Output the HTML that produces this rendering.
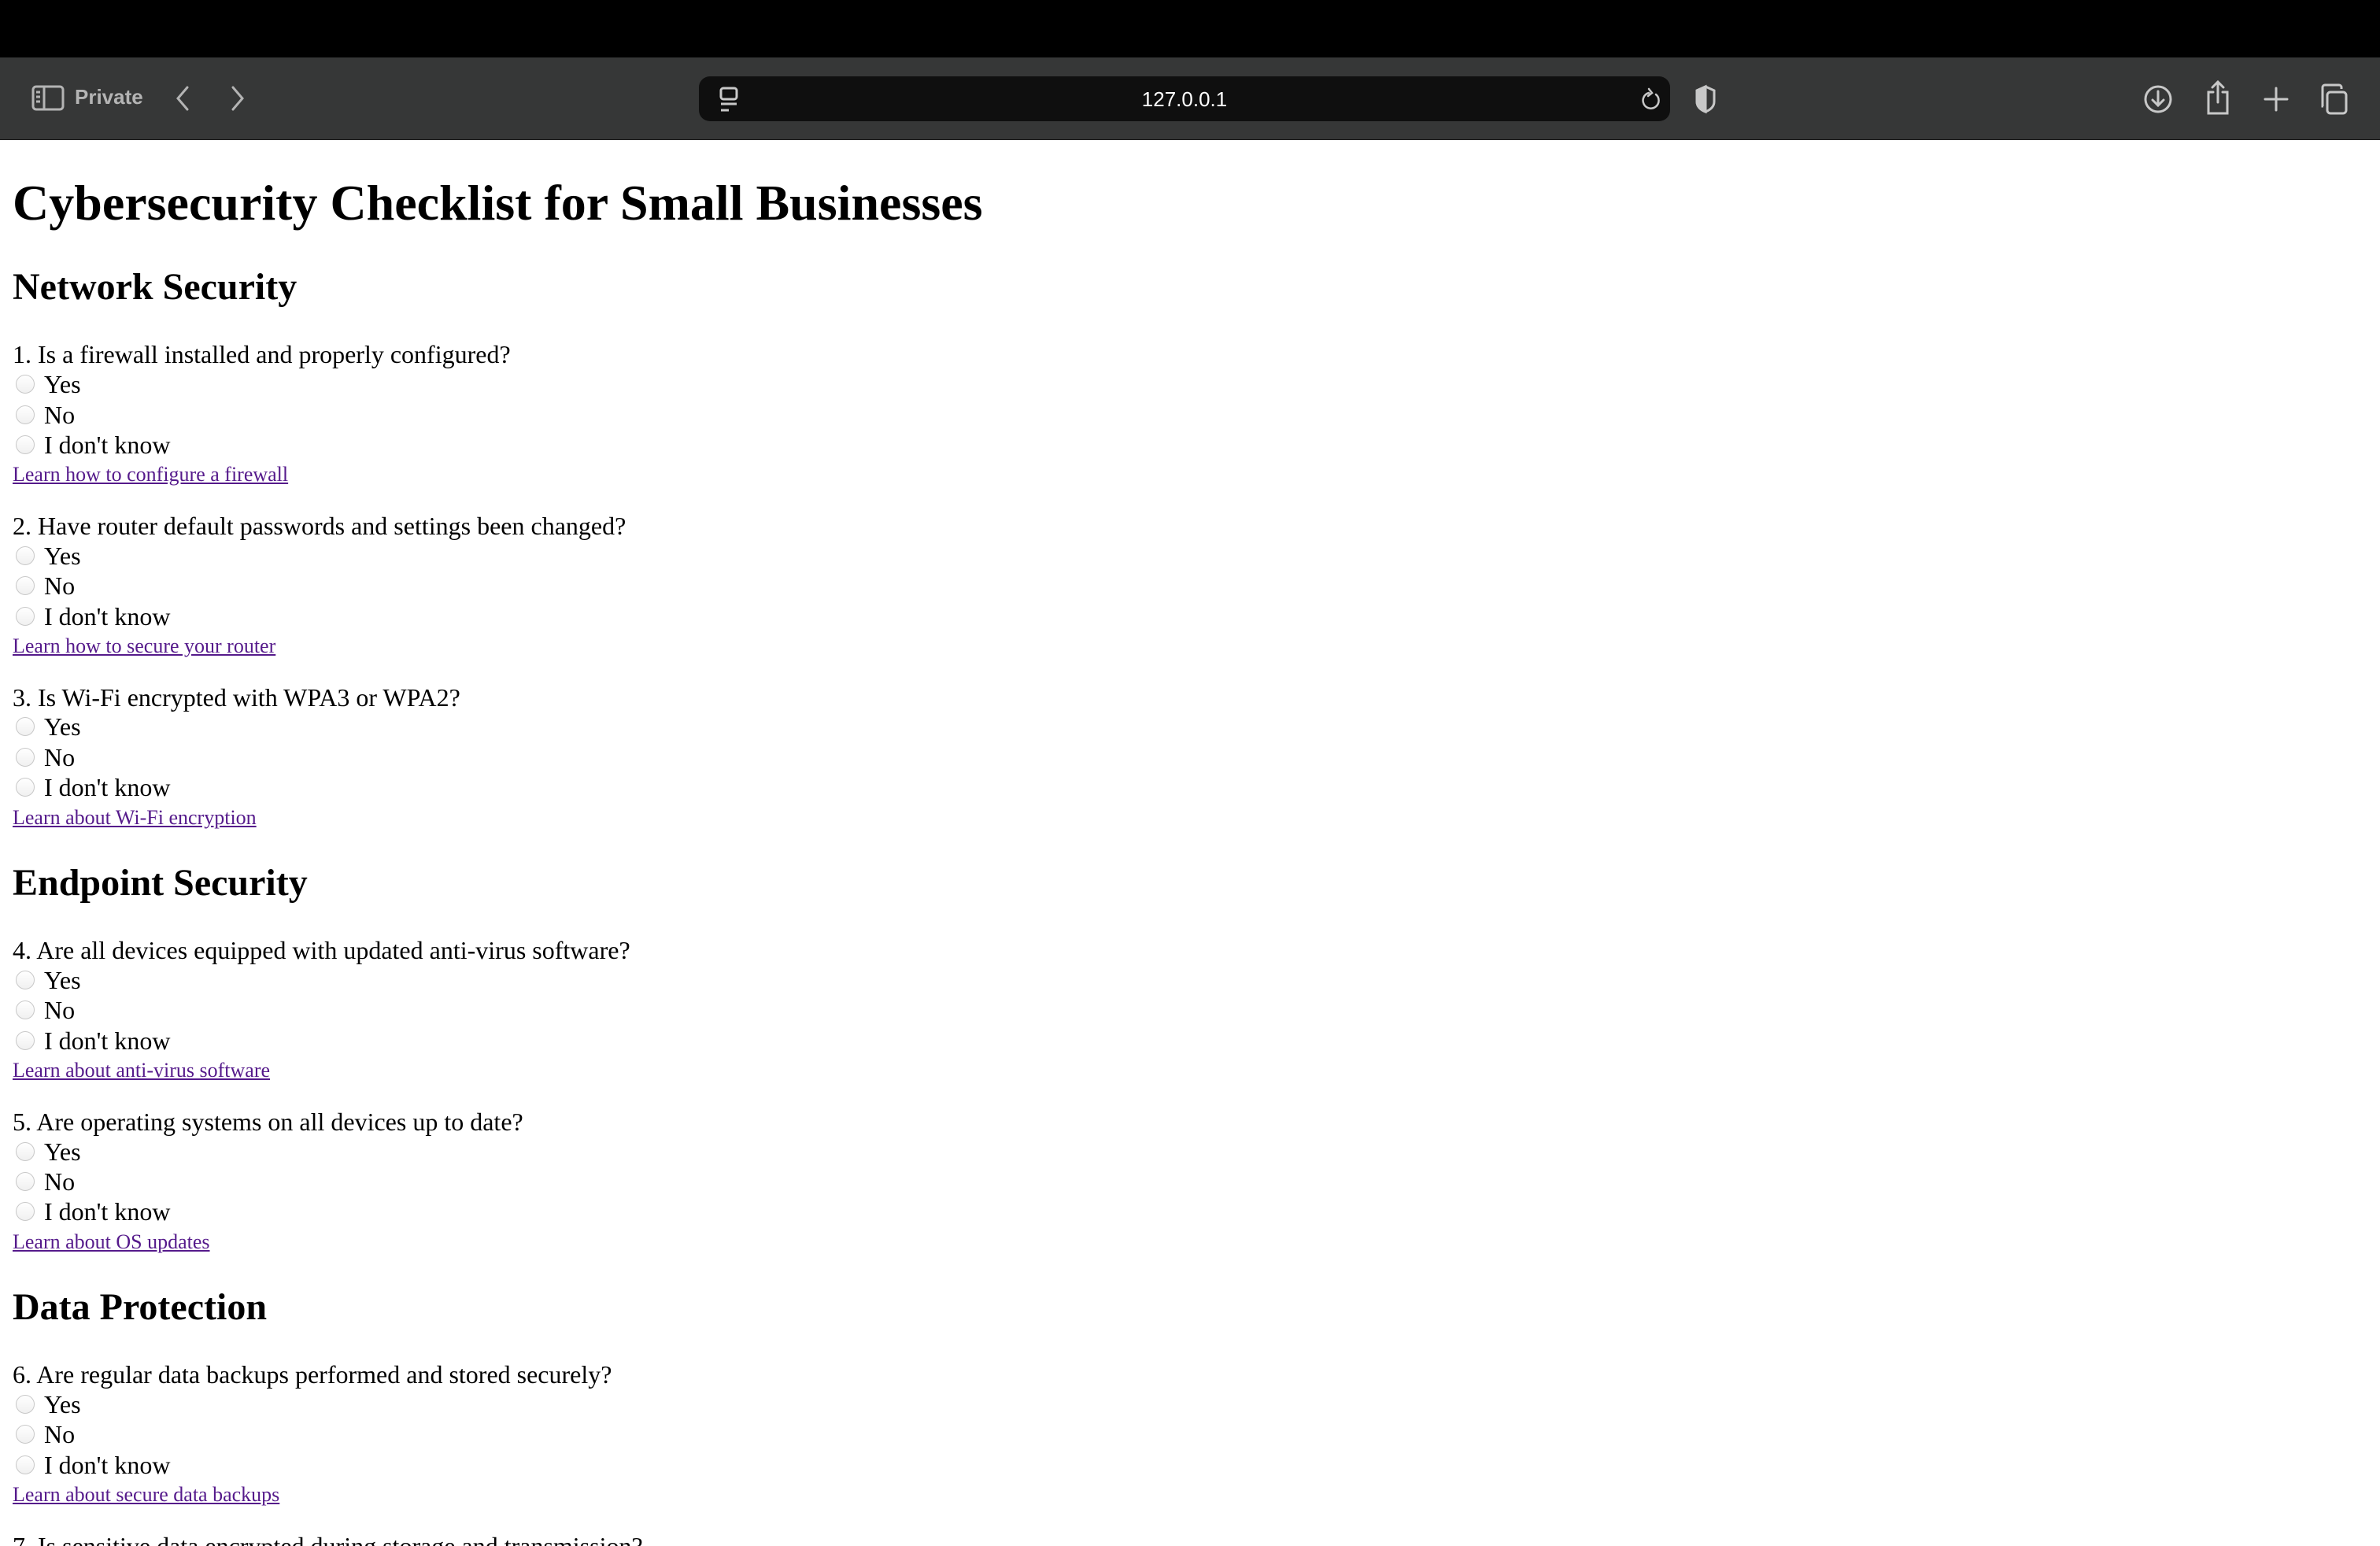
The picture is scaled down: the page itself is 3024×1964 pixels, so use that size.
<!DOCTYPE html>
<html><head><meta charset="utf-8"><style>
html,body{margin:0;padding:0;background:#fff;width:3024px;height:1964px;overflow:hidden}
.top{position:absolute;left:0;top:0;width:3024px;height:73px;background:#000}
.bar{position:absolute;left:0;top:73px;width:3024px;height:104px;background:#363737;border-bottom:1px solid #1a1a1a}
.url{position:absolute;left:888px;top:97px;width:1234px;height:57px;background:#0f0f0f;border-radius:14px}
.urltxt{position:absolute;left:0;right:0;top:14px;text-align:center;color:#fff;font:500 26px "Liberation Sans",sans-serif}
.priv{position:absolute;left:95px;top:108px;color:#b4b4b4;font:bold 26px "Liberation Sans",sans-serif}
svg{position:absolute}
.wrap{position:absolute;left:0;top:178px;width:3024px;height:1786px;overflow:hidden}
.page{width:1512px;height:910px;overflow:hidden;zoom:2;font-family:"Liberation Serif",serif;color:#000}
.in{margin:0 8px;padding-top:0.1px}
h1{font-size:32px;margin:21.34px 0 21.44px;line-height:36.8px}
h2{font-size:24px;margin:19.92px 0;line-height:27.6px}
.q + h2{margin-top:18.2px}
.q{font-size:16px;margin-bottom:13.85px}
.t{line-height:18.4px}
.r{height:19.2px;line-height:19.2px;position:relative;padding-left:20px}
.r:before{content:"";position:absolute;left:2px;top:3.5px;width:11px;height:11px;border-radius:50%;border:0.6px solid #c8c8c8;background:linear-gradient(#fff,#f0f0f0)}
a{font-size:13px;line-height:19px;color:#551a8b;text-decoration:underline;display:block}
</style></head><body>
<div class="top"></div>
<div class="bar"></div>
<svg style="left:40px;top:108px" width="42" height="34" viewBox="0 0 42 34" fill="none" stroke="#b4b4b4" stroke-width="3"><rect x="2" y="2" width="38" height="29" rx="4"/><line x1="16" y1="2" x2="16" y2="31"/><line x1="6" y1="9" x2="11" y2="9"/><line x1="6" y1="15" x2="11" y2="15"/><line x1="6" y1="21" x2="11" y2="21"/></svg>
<div class="priv">Private</div>
<svg style="left:220px;top:108px" width="24" height="34" viewBox="0 0 24 34" fill="none" stroke="#b4b4b4" stroke-width="3" stroke-linecap="round"><path d="M18 3 L6 17 L18 31"/></svg>
<svg style="left:290px;top:108px" width="24" height="34" viewBox="0 0 24 34" fill="none" stroke="#b4b4b4" stroke-width="3" stroke-linecap="round"><path d="M6 3 L18 17 L6 31"/></svg>
<div class="url"><div class="urltxt">127.0.0.1</div></div>
<svg style="left:912px;top:110px" width="30" height="34" viewBox="0 0 30 34" fill="none" stroke="#c8c8c8" stroke-width="3"><rect x="4" y="2" width="20" height="14" rx="3"/><line x1="4" y1="22" x2="24" y2="22"/><line x1="4" y1="30" x2="14" y2="30"/></svg>
<svg style="left:2084px;top:110px" width="30" height="34" viewBox="0 0 30 34" fill="none" stroke="#c8c8c8" stroke-width="2.5" stroke-linecap="round"><path d="M20 10 A10 10 0 1 1 11 8"/><path d="M11 3 L15 8 L10 12"/></svg>
<svg style="left:2152px;top:107px" width="30" height="38" viewBox="0 0 30 38" fill="none" stroke="#c8c8c8" stroke-width="3"><path d="M15 3 L26 8 V22 C26 29 20 33 15 35 C10 33 4 29 4 22 V8 Z"/><path d="M15 3 L4 8 V22 C4 29 10 33 15 35 Z" fill="#c8c8c8"/></svg>
<svg style="left:2722px;top:106px" width="40" height="40" viewBox="0 0 40 40" fill="none" stroke="#c8c8c8" stroke-width="3" stroke-linecap="round"><circle cx="20" cy="20" r="16"/><path d="M20 10 V28 M13 21 L20 28 L27 21"/></svg>
<svg style="left:2800px;top:101px" width="36" height="46" viewBox="0 0 36 46" fill="none" stroke="#c8c8c8" stroke-width="3" stroke-linecap="round"><path d="M12 16 H6 V43 H30 V16 H24"/><path d="M18 3 V29 M11 10 L18 3 L25 10"/></svg>
<svg style="left:2876px;top:110px" width="32" height="32" viewBox="0 0 32 32" fill="none" stroke="#c8c8c8" stroke-width="3" stroke-linecap="round"><path d="M16 2 V30 M2 16 H30"/></svg>
<svg style="left:2946px;top:106px" width="40" height="40" viewBox="0 0 40 40" fill="none" stroke="#c8c8c8" stroke-width="3"><rect x="11" y="11" width="24" height="27" rx="4"/><path d="M6 29 H5 V5 A3 3 0 0 1 8 2 H26 A3 3 0 0 1 29 5 V7"/></svg>
<div class="wrap"><div class="page"><div class="in">
<h1>Cybersecurity Checklist for Small Businesses</h1>
<h2>Network Security</h2>
<div class="q"><div class="t">1. Is a firewall installed and properly configured?</div><div class="r">Yes</div><div class="r">No</div><div class="r">I don't know</div><a>Learn how to configure a firewall</a></div>
<div class="q"><div class="t">2. Have router default passwords and settings been changed?</div><div class="r">Yes</div><div class="r">No</div><div class="r">I don't know</div><a>Learn how to secure your router</a></div>
<div class="q"><div class="t">3. Is Wi-Fi encrypted with WPA3 or WPA2?</div><div class="r">Yes</div><div class="r">No</div><div class="r">I don't know</div><a>Learn about Wi-Fi encryption</a></div>
<h2>Endpoint Security</h2>
<div class="q"><div class="t">4. Are all devices equipped with updated anti-virus software?</div><div class="r">Yes</div><div class="r">No</div><div class="r">I don't know</div><a>Learn about anti-virus software</a></div>
<div class="q"><div class="t">5. Are operating systems on all devices up to date?</div><div class="r">Yes</div><div class="r">No</div><div class="r">I don't know</div><a>Learn about OS updates</a></div>
<h2>Data Protection</h2>
<div class="q"><div class="t">6. Are regular data backups performed and stored securely?</div><div class="r">Yes</div><div class="r">No</div><div class="r">I don't know</div><a>Learn about secure data backups</a></div>
<div class="q"><div class="t">7. Is sensitive data encrypted during storage and transmission?</div></div>
</div></div></div>
</body></html>
